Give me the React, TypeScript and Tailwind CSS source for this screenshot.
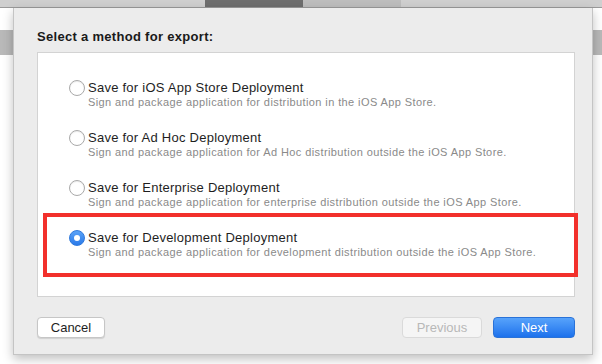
import React from 'react';

const options = [
  { title: 'Save for iOS App Store Deployment', desc: 'Sign and package application for distribution in the iOS App Store.' },
  { title: 'Save for Ad Hoc Deployment', desc: 'Sign and package application for Ad Hoc distribution outside the iOS App Store.' },
  { title: 'Save for Enterprise Deployment', desc: 'Sign and package application for enterprise distribution outside the iOS App Store.' },
  { title: 'Save for Development Deployment', desc: 'Sign and package application for development distribution outside the iOS App Store.' },
];

function Radio({ checked }: { checked: boolean }) {
  if (checked) {
    return (
      <div className="w-[16px] h-[16px] rounded-full bg-gradient-to-b from-[#5aa2f7] to-[#2a7ae9] border border-[#2f79dc] flex items-center justify-center shrink-0">
        <div className="w-[6px] h-[6px] rounded-full bg-white" />
      </div>
    );
  }
  return <div className="w-[16px] h-[16px] rounded-full bg-white border border-[#a9a9a9] shadow-[inset_0_1px_1px_rgba(0,0,0,0.08)] shrink-0" />;
}

export default function App() {
  const selected = 3;
  return (
    <div className="relative w-[602px] h-[364px] overflow-hidden bg-white" style={{ fontFamily: '"Liberation Sans", Arial, sans-serif' }}>
      {/* window behind the sheet */}
      <div className="h-[8px] bg-[#cfcfcf] border-b border-[#9a9a9a] flex">
        <div className="ml-[205px] w-[98px] bg-[#6e6e6e]" />
        <div className="w-[98px] bg-[#bdbdbd]" />
      </div>
      <div className="h-[22px]" />
      <div className="h-[25px] bg-[#b9b9b9]" />

      {/* sheet */}
      <div className="absolute left-[13px] top-[8px] w-[580px] h-[347px] bg-[#ececec] border-x border-b border-[#c4c4c4] shadow-[0_4px_10px_rgba(0,0,0,0.25)] pl-[23px] pr-[17px] pt-[21px]">
        <p className="text-[13px] leading-[16px] font-bold text-[#1a1a1a] tracking-[0.3px]">Select a method for export:</p>

        <div className="mt-[7px] h-[245px] bg-white border border-[#d3d3d3] pl-[31px] pt-[27px] flex flex-col gap-[21px]">
          {options.map((o, i) => (
            <div key={i} className="flex items-start gap-[3px]">
              <div className="pt-[0px]">
                <Radio checked={i === selected} />
              </div>
              <div>
                <p className="text-[13px] leading-[16px] text-[#1e1e1e] tracking-[0.25px]">{o.title}</p>
                <p className="text-[11px] leading-[13px] text-[#8a8a8a] tracking-[0.4px]">{o.desc}</p>
              </div>
            </div>
          ))}
        </div>

        <div className="mt-[20px] flex items-center">
          <button className="w-[68px] h-[21px] rounded-[4px] bg-white border border-[#c6c6c6] shadow-[0_1px_1px_rgba(0,0,0,0.12)] text-[13px] text-[#1e1e1e]">Cancel</button>
          <div className="flex-1" />
          <button className="w-[80px] h-[21px] rounded-[4px] bg-[#f5f5f5] border border-[#dadada] text-[13px] text-[#b8b8b8]">Previous</button>
          <button className="ml-[11px] w-[82px] h-[21px] rounded-[4px] bg-gradient-to-b from-[#57a3fb] to-[#1c71ec] border border-[#2a72d8] text-[13px] text-white">Next</button>
        </div>

        {/* red highlight */}
        <div className="absolute left-[29px] top-[205px] w-[535px] h-[64px] border-[4px] border-[#f2302b] pointer-events-none" />
      </div>
    </div>
  );
}
